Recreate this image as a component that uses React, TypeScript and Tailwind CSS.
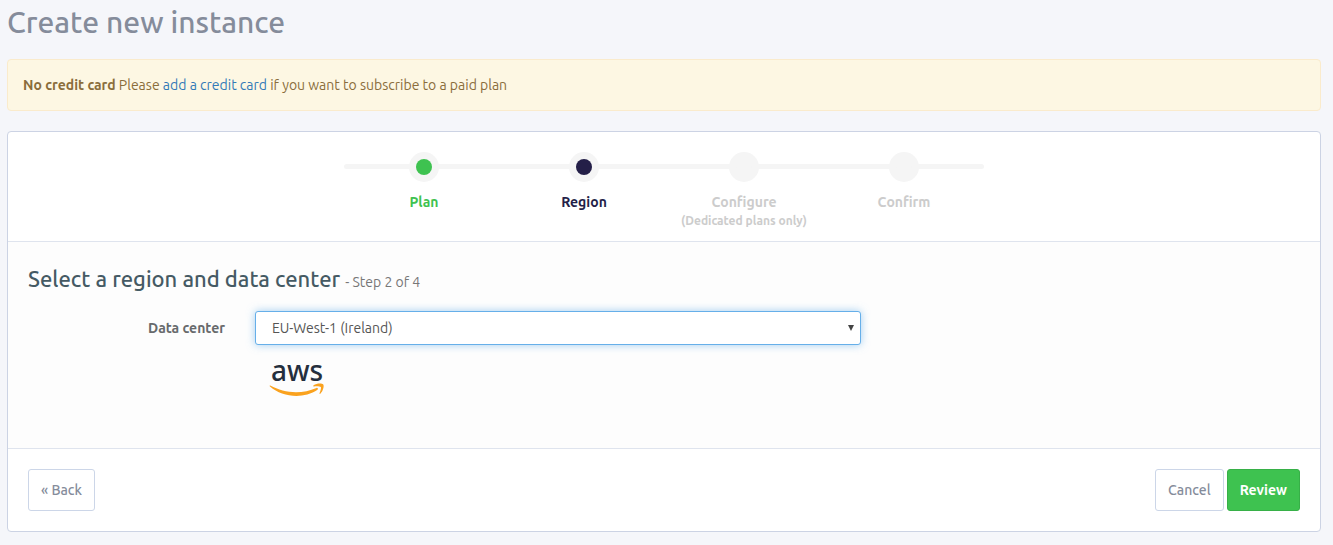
import { useState } from "react";

type StepState = "done" | "current" | "pending";

interface Step {
  label: string;
  note?: string;
  state: StepState;
}

const steps: Step[] = [
  { label: "Plan", state: "done" },
  { label: "Region", state: "current" },
  { label: "Configure", note: "(Dedicated plans only)", state: "pending" },
  { label: "Confirm", state: "pending" },
];

const dotColor: Record<StepState, string> = {
  done: "bg-[#3ec250]",
  current: "bg-[#241f48]",
  pending: "bg-[#f5f5f5]",
};

const textColor: Record<StepState, string> = {
  done: "text-[#3ec250]",
  current: "text-[#241f48]",
  pending: "text-[#cccccc]",
};

function Stepper() {
  return (
    <div className="relative mx-auto max-w-[640px]">
      <div className="absolute inset-x-0 top-3 h-[5px] rounded-sm bg-[#f5f5f5]" />
      <ol className="relative grid grid-cols-4">
        {steps.map((step) => (
          <li key={step.label} className={`flex flex-col items-center font-bold ${textColor[step.state]}`}>
            <span className="flex size-[30px] items-center justify-center rounded-full bg-[#f5f5f5]">
              <span className={`size-4 rounded-full ${dotColor[step.state]}`} />
            </span>
            <span className="mt-[10px] leading-5">{step.label}</span>
            {step.note && <span className="text-[12px] leading-[18px] whitespace-nowrap">{step.note}</span>}
          </li>
        ))}
      </ol>
    </div>
  );
}

function AwsLogo() {
  return (
    <div className="flex w-14 flex-col items-center" role="img" aria-label="aws">
      <span className="font-['Noto_Sans',sans-serif] text-[28px] leading-[22px] font-medium text-[#252f3e]">aws</span>
      <svg className="mt-[2px] h-[13px] w-14" viewBox="0 0 56 13" fill="#faa21e" aria-hidden="true">
        <path d="M1.3 2.500C9 6.800 18 9.200 27 9.200 34 9.200 41 7.600 47.500 4.900 48.600 4.500 49.600 6 48.500 6.800 42.500 11 34.500 13 27.500 13 17.500 13 8 9.600 1 3.500 .4 2.900 .7 2.200 1.300 2.500Z" />
        <path d="M44.600 2.200C47.600 .2 52.900 .2 54.100 1.300 55.500 2.800 54 8.300 51.300 10.700 50.900 11.100 50.300 10.900 50.500 10.400 51.300 8.500 52.500 4.900 51.800 4.100 51 3.200 47.200 3.300 45 3.500 44.200 3.500 44 2.700 44.600 2.200Z" />
      </svg>
    </div>
  );
}

const outlineButton =
  "h-[42px] rounded-[3px] border border-[#ccd6e8] bg-white px-3 font-medium text-[#858c9b] hover:bg-slate-50";

export default function App() {
  const [region, setRegion] = useState("eu-west-1");

  return (
    <div className="min-h-screen bg-[#f5f6fa] pr-3 pb-3 pl-[7px] font-['Ubuntu','Noto_Sans',sans-serif] text-[14px] leading-5 text-[#676a6c]">
      <h1 className="pt-1 text-[30px] leading-9 font-medium text-[#858c9b]">Create new instance</h1>

      <div role="alert" className="mt-[19px] rounded border border-[#faebcc] bg-[#fdf7e3] px-[15px] py-[15px] text-[#8a6d3b]">
        <strong className="font-bold">No credit card</strong> Please{" "}
        <a href="#billing" className="text-[#337ab7] hover:underline">add a credit card</a> if you want to subscribe to a paid plan
      </div>

      <main className="mt-5 rounded border border-[#ccd3e4] bg-white">
        <header className="border-b border-[#dfe4ee] px-5 pt-5 pb-[11px]">
          <Stepper />
        </header>

        <form onSubmit={(e) => e.preventDefault()}>
          <section className="border-b border-[#dfe4ee] bg-[#fdfdfd] px-5 pt-5 pb-[52px]">
            <h2 className="text-[22px] leading-[34px] font-medium text-[#455a64]">
              Select a region and data center <small className="text-[14px] font-normal text-[#777777]">- Step 2 of 4</small>
            </h2>
            <div className="mt-3 grid grid-cols-12">
              <label htmlFor="region" className="col-span-2 pt-[7px] pr-[15px] text-right font-bold">
                Data center
              </label>
              <div className="col-span-6 px-[15px]">
                <div className="relative">
                  <select
                    id="region"
                    value={region}
                    onChange={(e) => setRegion(e.target.value)}
                    className="block h-[34px] w-full appearance-none rounded-[3px] border border-[#66afe9] bg-white px-4 text-[#555555] shadow-[0_0_8px_rgba(102,175,233,0.6)] outline-none"
                  >
                    <option value="eu-west-1">EU-West-1 (Ireland)</option>
                  </select>
                  <svg
                    className="pointer-events-none absolute top-[14px] right-[7px] size-[6px]"
                    viewBox="0 0 6 6"
                    fill="#444444"
                    aria-hidden="true"
                  >
                    <path d="M0 0H6L3 6Z" />
                  </svg>
                </div>
                <div className="mt-[14px] pl-[14px]">
                  <AwsLogo />
                </div>
              </div>
            </div>
          </section>

          <footer className="flex items-center justify-between p-5">
            <button type="button" className={outlineButton}>« Back</button>
            <div className="flex gap-[3px]">
              <button type="button" className={outlineButton}>Cancel</button>
              <button
                type="submit"
                className="h-[42px] rounded-[3px] border border-[#37b048] bg-[#3ec250] px-3 font-bold text-white hover:bg-[#37b048]"
              >
                Review
              </button>
            </div>
          </footer>
        </form>
      </main>
    </div>
  );
}
